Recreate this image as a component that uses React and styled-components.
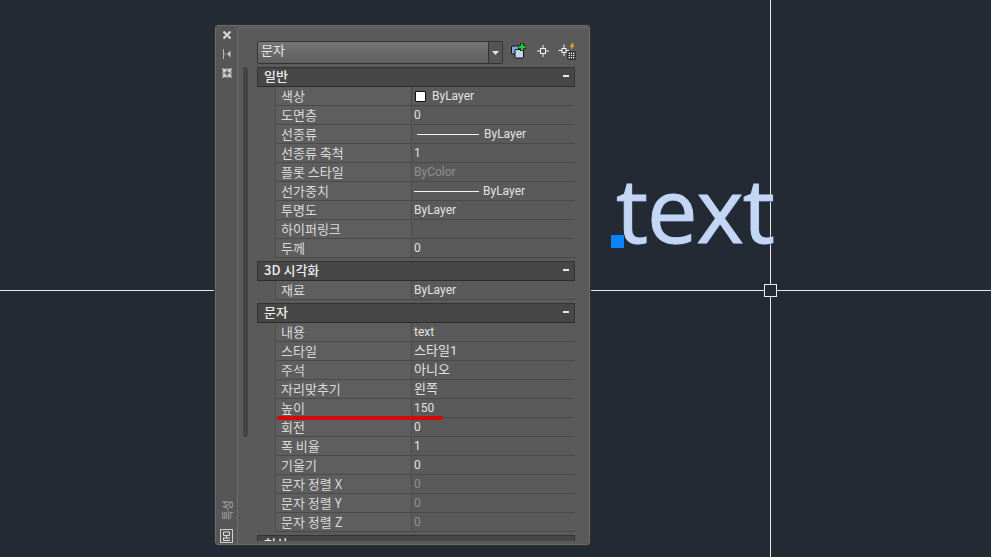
import React from 'react';
import styled, { createGlobalStyle } from 'styled-components';

const KOREAN = `"Noto Sans CJK KR", "Noto Sans", sans-serif`;
const VALUE = `Roboto, "Noto Sans CJK KR", sans-serif`;

const sections = [
  {
    title: '일반',
    rows: [
      { name: '색상', value: 'ByLayer', kind: 'color' },
      { name: '도면층', value: '0' },
      { name: '선종류', value: 'ByLayer', kind: 'line', lineWidth: 62 },
      { name: '선종류 축척', value: '1' },
      { name: '플롯 스타일', value: 'ByColor', muted: true },
      { name: '선가중치', value: 'ByLayer', kind: 'line', lineWidth: 65, tight: true },
      { name: '투명도', value: 'ByLayer' },
      { name: '하이퍼링크', value: '' },
      { name: '두께', value: '0' },
    ],
  },
  { title: '3D 시각화', rows: [{ name: '재료', value: 'ByLayer' }] },
  {
    title: '문자',
    rows: [
      { name: '내용', value: 'text' },
      { name: '스타일', value: '스타일1', hangul: true },
      { name: '주석', value: '아니오', hangul: true },
      { name: '자리맞추기', value: '왼쪽', hangul: true },
      { name: '높이', value: '150', marked: true },
      { name: '회전', value: '0' },
      { name: '폭 비율', value: '1' },
      { name: '기울기', value: '0' },
      { name: '문자 정렬 X', value: '0', muted: true },
      { name: '문자 정렬 Y', value: '0', muted: true },
      { name: '문자 정렬 Z', value: '0', muted: true },
    ],
  },
  { title: '형상', rows: [] },
];

export default function App() {
  return (
    <Canvas>
      <GlobalStyle />
      <CrossV />
      <CrossH />
      <Pickbox />
      <DrawnText>text</DrawnText>
      <Grip />
      <Palette>
        <SideStrip>
          <SideTop>
            <SideIcon viewBox="0 0 12 12">
              <path d="M2.500 2.500l7 7M9.500 2.500l-7 7" stroke="#d4d4d4" strokeWidth="2.200" fill="none" />
            </SideIcon>
            <SideIcon viewBox="0 0 12 12">
              <path d="M2.500 1v10" stroke="#b8b8b8" strokeWidth="1" />
              <path d="M9.500 2.500v7L6 6z" fill="#c4c4c4" />
              <path d="M3 6l2-2v4z" fill="#7e7e7e" />
            </SideIcon>
            <SideIcon viewBox="0 0 12 12">
              <path
                d="M1 1l3 1 2-1 2 1 3-1-1 3 1 2-1 2 1 3-3-1-2 1-2-1-3 1 1-3-1-2 1-2z"
                fill="#cfcfcf"
              />
              <path d="M1 6h10M6 1v10" stroke="#6a6a6a" strokeWidth="1" />
              <rect x="4.500" y="4.500" width="3" height="3" fill="#5c5c5c" />
            </SideIcon>
          </SideTop>
          <SideBottom>
            <TitleGlyph>특성</TitleGlyph>
            <MenuBox>
              <svg width="13" height="14" viewBox="0 0 13 14">
                <rect x="0.500" y="0.500" width="12" height="13" fill="none" stroke="#cfcfcf" />
                <path d="M3.500 3h6v3.500h-6zM6.500 6.500v2.500M3 9h7M3.500 9v2.500h6.500" stroke="#dedede" fill="none" />
              </svg>
            </MenuBox>
          </SideBottom>
        </SideStrip>
        <Body>
          <Scroll />
          <Toolbar>
            <Combo>
              <ComboLabel>문자</ComboLabel>
              <ComboArrow>
                <svg width="7" height="4" viewBox="0 0 7 4">
                  <path d="M0 0h7L3.500 4z" fill="#e6e6e6" />
                </svg>
              </ComboArrow>
            </Combo>
            <Tools>
              <svg width="18" height="18" viewBox="0 0 18 18">
                <rect x="1.500" y="4" width="8" height="8" rx="1" fill="#7fa6d8" stroke="#111" />
                <rect x="5" y="7.500" width="8.500" height="8.500" rx="1" fill="#c3d6f0" stroke="#111" />
                <path d="M12 1v8M8 5h8" stroke="#111" strokeWidth="4" />
                <path d="M12 1.500v7M8.500 5h7" stroke="#25c63a" strokeWidth="2.400" />
              </svg>
              <svg width="16" height="16" viewBox="0 0 16 16">
                <path d="M8 2v4M8 10v4M2 8h4M10 8h4" stroke="#f2f2f2" strokeWidth="1" />
                <rect x="5.500" y="5.500" width="5" height="5" fill="none" stroke="#f2f2f2" />
              </svg>
              <svg width="18" height="18" viewBox="0 0 18 18">
                <path d="M6 2.500v4M6 10v4M0.500 8.500h3.500M8 8.500h3" stroke="#f2f2f2" strokeWidth="1" />
                <rect x="4" y="6.500" width="4" height="4" fill="none" stroke="#f2f2f2" />
                <path d="M14.500 1l-3 4h2l-1 3 4-4.500h-2l1.500-2.500z" fill="#f0a81e" />
                <rect x="10" y="10" width="7" height="7" fill="#f2f2f2" stroke="#111" />
                <path d="M10 12.500h7M10 14.500h7M12.500 10v7M14.500 10v7" stroke="#222" strokeWidth="0.800" fill="none" />
              </svg>
            </Tools>
          </Toolbar>
          <Sections>
            {sections.map((section) => (
              <Section key={section.title}>
                <SectionHeader>
                  <span>{section.title}</span>
                  <Collapse />
                </SectionHeader>
                {section.rows.map((row) => (
                  <Row key={row.name}>
                    <NameCell>{row.name}</NameCell>
                    <ValueCell
                      $muted={row.muted}
                      $line={row.kind === 'line'}
                      $tight={row.tight}
                      $hangul={row.hangul}
                    >
                      {row.kind === 'color' && <Swatch />}
                      {row.kind === 'line' && <LineSample style={{ width: row.lineWidth }} />}
                      {row.value}
                    </ValueCell>
                    {row.marked && <RedMark />}
                  </Row>
                ))}
              </Section>
            ))}
          </Sections>
        </Body>
      </Palette>
    </Canvas>
  );
}

const GlobalStyle = createGlobalStyle`
  html, body {
    margin: 0;
    padding: 0;
    background: #232a33;
  }
`;

const Canvas = styled.div`
  position: relative;
  width: 991px;
  height: 557px;
  overflow: hidden;
  background: #232a33;
  font-family: ${KOREAN};
`;

const CrossV = styled.div`
  position: absolute;
  left: 770px;
  top: 0;
  width: 1px;
  height: 557px;
  background: #e4e6e8;
`;

const CrossH = styled.div`
  position: absolute;
  left: 0;
  top: 290px;
  width: 991px;
  height: 1px;
  background: #e4e6e8;
`;

const Pickbox = styled.div`
  position: absolute;
  left: 764px;
  top: 284px;
  width: 11px;
  height: 11px;
  border: 1px solid #f0f0f0;
  background: #232a33;
`;

const DrawnText = styled.div`
  position: absolute;
  left: 616px;
  top: 152px;
  font-family: 'Open Sans', 'Liberation Sans', sans-serif;
  font-size: 90px;
  line-height: 112px;
  letter-spacing: -1px;
  color: #c3d6f5;
  -webkit-text-stroke: 1px #c3d6f5;
  text-shadow: 1px 1px 0 #2c3f60;
`;

const Grip = styled.div`
  position: absolute;
  left: 611px;
  top: 235px;
  width: 13px;
  height: 13px;
  background: #0a84f8;
`;

const Palette = styled.div`
  position: absolute;
  left: 215px;
  top: 25px;
  width: 375px;
  height: 520px;
  display: flex;
  overflow: hidden;
  box-sizing: border-box;
  background: #555;
  border: 1px solid #6b6b6b;
  border-radius: 3px;
  box-shadow: 0 0 0 1px #2b2f35;
`;

const SideStrip = styled.div`
  width: 21px;
  flex: none;
  display: flex;
  flex-direction: column;
  align-items: center;
  justify-content: space-between;
  padding: 3px 0 1px;
  box-sizing: border-box;
  background: #565656;
`;

const SideTop = styled.div`
  display: flex;
  flex-direction: column;
  gap: 7px;
  align-items: center;
`;

const SideIcon = styled.svg`
  width: 12px;
  height: 12px;
`;

const SideBottom = styled.div`
  display: flex;
  flex-direction: column;
  align-items: center;
  gap: 9px;
`;

const TitleGlyph = styled.div`
  writing-mode: vertical-rl;
  text-orientation: sideways;
  transform: rotate(180deg);
  font-size: 11px;
  line-height: 12px;
  color: #a8a8a8;
`;

const MenuBox = styled.div`
  width: 13px;
  height: 14px;
  display: flex;
`;

const Body = styled.div`
  position: relative;
  flex: 1;
  min-width: 0;
  display: flex;
  flex-direction: column;
  padding: 13px 14px 3px 19px;
  background: #5a5a5a;
  border-left: 1px solid #6e6e6e;
  border-top: 1px solid #6e6e6e;
  border-radius: 4px 4px 0 0;
  margin-top: 1px;
`;

const Scroll = styled.div`
  position: absolute;
  left: 5px;
  top: 39px;
  width: 5px;
  height: 370px;
  border-radius: 3px;
  background: #444;
`;

const Toolbar = styled.div`
  display: flex;
  align-items: center;
  flex: none;
  height: 23px;
  margin-bottom: 3px;
`;

const Combo = styled.div`
  width: 246px;
  height: 23px;
  flex: none;
  box-sizing: border-box;
  display: flex;
  border: 1px solid #333;
  border-radius: 2px;
  background: linear-gradient(#767676, #5e5e5e);
`;

const ComboLabel = styled.div`
  flex: 1;
  padding-left: 3px;
  font-size: 13px;
  line-height: 16px;
  color: #e6e6e6;
`;

const ComboArrow = styled.div`
  width: 13px;
  display: flex;
  align-items: center;
  justify-content: center;
  border-left: 1px solid #333;
  background: #555;
`;

const Tools = styled.div`
  display: flex;
  align-items: center;
  flex: none;
  gap: 7px;
  margin: 0 0 3px 7px;
`;

const Sections = styled.div`
  flex: 1;
  min-height: 0;
  overflow: hidden;
`;

const Section = styled.section`
  margin-bottom: 3px;
`;

const SectionHeader = styled.div`
  height: 20px;
  box-sizing: border-box;
  display: flex;
  align-items: center;
  justify-content: space-between;
  padding: 0 5px 2px 6px;
  border: 1px solid #333;
  border-bottom-color: #2c2c2c;
  background: #474747;
  color: #ececec;
  font-size: 13px;
  font-weight: 500;
  line-height: 16px;
`;

const Collapse = styled.i`
  width: 6px;
  height: 2px;
  background: #e8e8e8;
`;

const Row = styled.div`
  position: relative;
  display: flex;
  height: 19px;
  margin-left: 18px;
  box-sizing: border-box;
  border-bottom: 1px solid #4a4a4a;
  border-left: 1px solid #4f4f4f;
  line-height: 18px;
`;

const NameCell = styled.div`
  width: 136px;
  flex: none;
  box-sizing: border-box;
  padding-left: 5px;
  font-size: 13px;
  color: #dadada;
  background: #5e5e5e;
  border-right: 1px solid #4d4d4d;
`;

const ValueCell = styled.div`
  flex: 1;
  display: flex;
  align-items: center;
  box-sizing: border-box;
  padding-left: ${(props) => (props.$line && !props.$tight ? '5px' : '2px')};
  gap: ${(props) => (props.$tight ? '4px' : '5px')};
  font-family: ${VALUE};
  font-size: ${(props) => (props.$hangul ? '13px' : '12px')};
  color: ${(props) => (props.$muted ? '#8f8f8f' : '#e2e2e2')};
`;

const Swatch = styled.i`
  width: 9px;
  height: 9px;
  margin: 0 1px 0 1px;
  background: #fff;
  border: 1px solid #111;
  border-radius: 1px;
`;

const LineSample = styled.i`
  height: 1px;
  background: #f4f4f4;
`;

const RedMark = styled.div`
  position: absolute;
  z-index: 1;
  left: 1px;
  bottom: -3px;
  width: 166px;
  height: 4px;
  border-radius: 2px;
  background: #d40a0a;
`;
